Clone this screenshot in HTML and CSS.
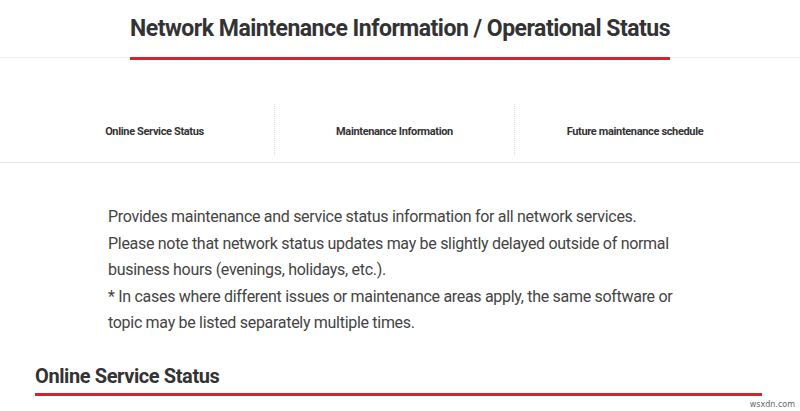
FILE: index.html
```html
<!DOCTYPE html>
<html lang="en">
<head>
<meta charset="utf-8">
<title>Network Maintenance Information / Operational Status</title>
<link rel="stylesheet" href="styles.css">
</head>
<body>
<header class="page-header">
  <h1 class="page-title">Network Maintenance Information / Operational Status</h1>
</header>
<nav class="tabs">
  <div class="tabs-inner">
    <a class="tab" href="#status">Online Service Status</a>
    <a class="tab" href="#maintenance">Maintenance Information</a>
    <a class="tab" href="#future">Future maintenance schedule</a>
  </div>
</nav>
<main class="content">
  <div class="intro">
    <p>Provides maintenance and service status information for all network services.<br>
    Please note that network status updates may be slightly delayed outside of normal business hours (evenings, holidays, etc.).<br>
    * In cases where different issues or maintenance areas apply, the same software or topic may be listed separately multiple times.</p>
  </div>
  <h2 class="section-title" id="status">Online Service Status</h2>
</main>
<div class="watermark">wsxdn.com</div>
</body>
</html>
```
FILE: styles.css
```css
html, body {
  margin: 0;
  padding: 0;
  background: #fff;
}
body {
  font-family: Roboto, "Liberation Sans", Arial, sans-serif;
  color: #333;
  width: 800px;
  height: 411px;
  overflow: hidden;
  position: relative;
}
.page-header {
  display: flex;
  justify-content: center;
  border-bottom: 1px solid #eee;
  height: 57px;
}
.page-title {
  margin: 0 0 -3px;
  padding-top: 14px;
  height: 43px;
  font-size: 23px;
  letter-spacing: -0.5px;
  font-weight: 700;
  line-height: 30px;
  color: #333;
  border-bottom: 3px solid #d9202c;
  box-sizing: content-box;
}
.tabs {
  border-bottom: 1px solid #e6e6e6;
  height: 105px;
  box-sizing: border-box;
  padding-top: 46px;
}
.tabs-inner {
  display: grid;
  grid-template-columns: repeat(3, 240px);
  margin-left: 35px;
}
.tab {
  display: flex;
  align-items: center;
  justify-content: center;
  height: 51px;
  font-size: 11px;
  letter-spacing: -0.35px;
  font-weight: 700;
  color: #333;
  text-decoration: none;
  padding-top: 3px;
  box-sizing: border-box;
  border-right: 1px dotted #ddd;
}
.tab:last-child {
  border-right: none;
}
.content {
  padding: 0 38px 0 35px;
}
.intro {
  padding: 41px 0 0 73px;
  width: 580px;
}
.intro p {
  margin: 0;
  font-size: 16px;
  letter-spacing: -0.3px;
  line-height: 26.5px;
  color: #444;
}
.section-title {
  margin: 26px 0 0;
  font-size: 20px;
  letter-spacing: -0.4px;
  font-weight: 700;
  line-height: 26px;
  color: #333;
  padding-bottom: 4px;
  border-bottom: 3px solid #d9202c;
}
.watermark {
  position: absolute;
  right: 5px;
  bottom: 2px;
  font-size: 8px;
  color: #666;
  font-family: "DejaVu Sans", sans-serif;
}
```
